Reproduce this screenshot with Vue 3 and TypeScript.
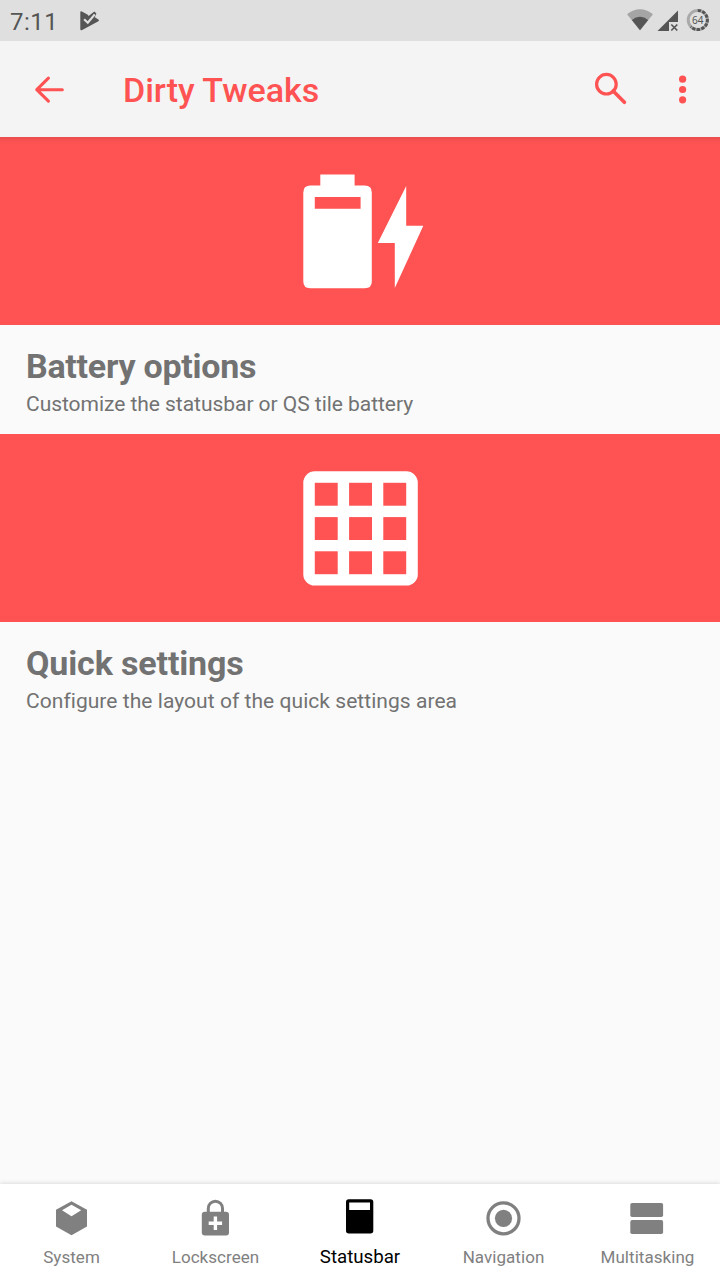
<script setup lang="ts">
import { ref } from 'vue'

interface Card {
  icon: 'battery' | 'grid'
  title: string
  summary: string
}

const cards: Card[] = [
  { icon: 'battery', title: 'Battery options', summary: 'Customize the statusbar or QS tile battery' },
  { icon: 'grid', title: 'Quick settings', summary: 'Configure the layout of the quick settings area' },
]

const tabs: string[] = ['System', 'Lockscreen', 'Statusbar', 'Navigation', 'Multitasking']
const active = ref('Statusbar')
const cells: number[] = [11.5, 45.8, 80]
</script>

<template>
  <div class="screen">
    <div class="status">
      <span class="clock">7:11</span>
      <svg class="play" width="24" height="24" viewBox="0 0 24 24">
        <path d="M3.3 2.3Q3.3 .6 4.9 1.4L10.8 4.8L11.6 6L17.4 1.4L19.4 3.6L17.8 7.2L21.4 9.5Q22.6 10.4 21.4 11.3L5.2 20Q3.3 20.8 3.3 19Z" fill="#555" />
        <path d="M7.1 9.2L10.8 12.7L17.8 4.4" fill="none" stroke="#dfdfdf" stroke-width="2.2" />
      </svg>
      <svg class="signals" width="94" height="40" viewBox="626 0 94 40">
        <path d="M627 14.2Q640 4.3 653 14.2L640 30.3Z" fill="#a5a5a5" />
        <path d="M631.8 20Q640 13.6 648.2 20L640 30.3Z" fill="#555" />
        <path d="M678 10.5V22H669V31H657.5Z" fill="#555" />
        <path d="M671.3 24.5L677.3 30.5M677.3 24.5L671.3 30.5" stroke="#555" stroke-width="1.7" />
        <circle cx="697.8" cy="20" r="9.6" fill="none" stroke="#aaa" stroke-width="3" />
        <path d="M697.8 10.4A9.6 9.6 0 1 1 690.8 26.6" fill="none" stroke="#555" stroke-width="3" stroke-dasharray="3.3 1.3" />
        <text x="697.8" y="24" text-anchor="middle" class="level">64</text>
      </svg>
    </div>

    <header class="bar">
      <svg class="back" width="32" height="32" viewBox="0 0 32 32">
        <path d="M29.3 15.7H3.8M15.4 4.2L3.8 15.7L15.4 27.2" fill="none" stroke="#ff5252" stroke-width="3.1" stroke-linecap="round" stroke-linejoin="round" />
      </svg>
      <h1>Dirty Tweaks</h1>
      <svg class="actions" width="130" height="96" viewBox="590 41 130 96">
        <g fill="none" stroke="#ff5252">
          <circle cx="606.4" cy="84.2" r="9.8" stroke-width="3.2" />
          <path d="M613.2 91L624.4 102.2" stroke-width="3.7" stroke-linecap="round" />
        </g>
        <g fill="#ff5252">
          <circle cx="682.6" cy="79.2" r="3.6" />
          <circle cx="682.6" cy="89.5" r="3.6" />
          <circle cx="682.6" cy="99.8" r="3.6" />
        </g>
      </svg>
    </header>

    <main>
      <section v-for="card in cards" :key="card.title" :class="['card', card.icon]">
        <div class="banner">
          <svg v-if="card.icon === 'battery'" class="art" width="124" height="120" viewBox="0 0 124 120">
            <path fill="#fff" fill-rule="evenodd" d="M17 3.4H51.3V14.5H61.5Q68.5 14.5 68.5 21.5V110.5Q68.5 117.3 61.5 117.3H7Q0 117.3 0 110.5V21.5Q0 14.5 7 14.5H17ZM11.5 26V37.7H57.3V26Z" />
            <path fill="#fff" d="M102.9 15V54.8H120L91.5 117V72H74.5Z" />
          </svg>
          <svg v-else class="art" width="124" height="120" viewBox="0 0 124 120">
            <rect x="0" y="3.3" width="114.5" height="114.3" rx="11.4" fill="#fff" />
            <template v-for="row in cells" :key="row">
              <rect v-for="col in cells" :key="col" :x="col" :y="row + 3.3" width="22.9" height="22.9" fill="#ff5252" />
            </template>
          </svg>
        </div>
        <div class="copy">
          <h2>{{ card.title }}</h2>
          <p>{{ card.summary }}</p>
        </div>
      </section>
    </main>

    <nav>
      <button v-for="tab in tabs" :key="tab" :class="['tab', { active: tab === active }]" @click="active = tab">
        <svg width="40" height="40" viewBox="0 0 40 40" fill="currentColor">
          <path v-if="tab === 'System'" fill-rule="evenodd" d="M19.5 3.2L35 11.8V28.6L19.5 37.3L4 28.6V11.8ZM19.5 6.8L10 12.3L19.5 18.2L29.2 12.3Z" />
          <template v-else-if="tab === 'Lockscreen'">
            <rect x="5.8" y="13.7" width="27.2" height="23.8" rx="3" />
            <path d="M12.3 14.5V10.3A7.1 7.1 0 0 1 26.5 10.3V14.5" fill="none" stroke="currentColor" stroke-width="3" />
            <path d="M19.4 18.5V32M12.7 25.2H26.1" stroke="#fff" stroke-width="3.4" />
          </template>
          <path v-else-if="tab === 'Statusbar'" fill-rule="evenodd" d="M8.8 1.3H30.5Q33.3 1.3 33.3 4V32.8Q33.3 35.5 30.5 35.5H8.8Q6 35.5 6 32.8V4Q6 1.3 8.8 1.3ZM9.2 4.5V12.1H30V4.5Z" />
          <template v-else-if="tab === 'Navigation'">
            <circle cx="19.5" cy="20.3" r="15.5" fill="none" stroke="currentColor" stroke-width="3.3" />
            <circle cx="19.5" cy="20.3" r="8.6" />
          </template>
          <template v-else>
            <rect x="2.3" y="5" width="32.8" height="14" rx="1.8" />
            <rect x="2.3" y="22.1" width="32.8" height="14" rx="1.8" />
          </template>
        </svg>
        <span>{{ tab }}</span>
      </button>
    </nav>
  </div>
</template>

<style>
body {
  margin: 0;
  background: #fafafa;
}
</style>

<style scoped>
.screen {
  width: 720px;
  height: 1280px;
  display: flex;
  flex-direction: column;
  overflow: hidden;
  background: #fafafa;
  font-family: Roboto, "Liberation Sans", sans-serif;
}
h1,
h2,
p {
  margin: 0;
  white-space: nowrap;
}
.status {
  height: 41px;
  box-sizing: border-box;
  display: flex;
  background: #dfdfdf;
  flex: none;
}
.clock {
  width: 67px;
  padding-left: 10px;
  font-size: 24px;
  line-height: 44px;
  letter-spacing: 0.5px;
  color: #555;
}
.play {
  margin-top: 10px;
}
.signals {
  margin-left: auto;
}
.level {
  font-family: "Noto Sans", sans-serif;
  font-size: 10px;
  fill: #555;
}
.bar {
  height: 96px;
  flex: none;
  display: flex;
  background: #f4f4f4;
}
.back {
  margin: 33px 0 0 33px;
}
h1 {
  margin-left: 58px;
  font-size: 34px;
  line-height: 99px;
  font-weight: 500;
  color: #ff5252;
}
.actions {
  margin-left: auto;
}
main {
  flex: 1;
}
.card {
  height: 297px;
}
.banner {
  height: 188px;
  background: #ff5252;
}
.card:first-child .banner {
  background: linear-gradient(#e94d4d 0, #f75151 3px, #ff5252 8px);
}
.art {
  display: block;
  padding: 34px 0 0 303.3px;
}
.copy {
  padding: 20px 26px 0;
  color: #727272;
}
h2 {
  font-size: 34px;
  line-height: 43px;
  font-weight: 700;
}
p {
  font-size: 21px;
  line-height: 32px;
}
.battery h2 {
  letter-spacing: -0.26px;
}
.battery p {
  letter-spacing: -0.04px;
}
.grid h2 {
  letter-spacing: -0.14px;
}
.grid p {
  letter-spacing: 0.05px;
  font-variant-ligatures: common-ligatures;
}
nav {
  height: 96px;
  flex: none;
  display: flex;
  background: #fff;
  box-shadow: 0 -1px 4px rgba(0, 0, 0, 0.12);
}
.tab {
  width: 144px;
  padding: 14px 0 0;
  border: 0;
  background: none;
  display: flex;
  flex-direction: column;
  align-items: center;
  font-family: inherit;
  font-size: 17px;
  line-height: 20px;
  color: #808080;
}
.tab span {
  margin: 9px 1px 0 0;
  letter-spacing: 0.05px;
}
.tab.active {
  color: #000;
  font-size: 18.7px;
}
.tab.active span {
  margin: 9px 0 0;
  letter-spacing: 0;
}
</style>
